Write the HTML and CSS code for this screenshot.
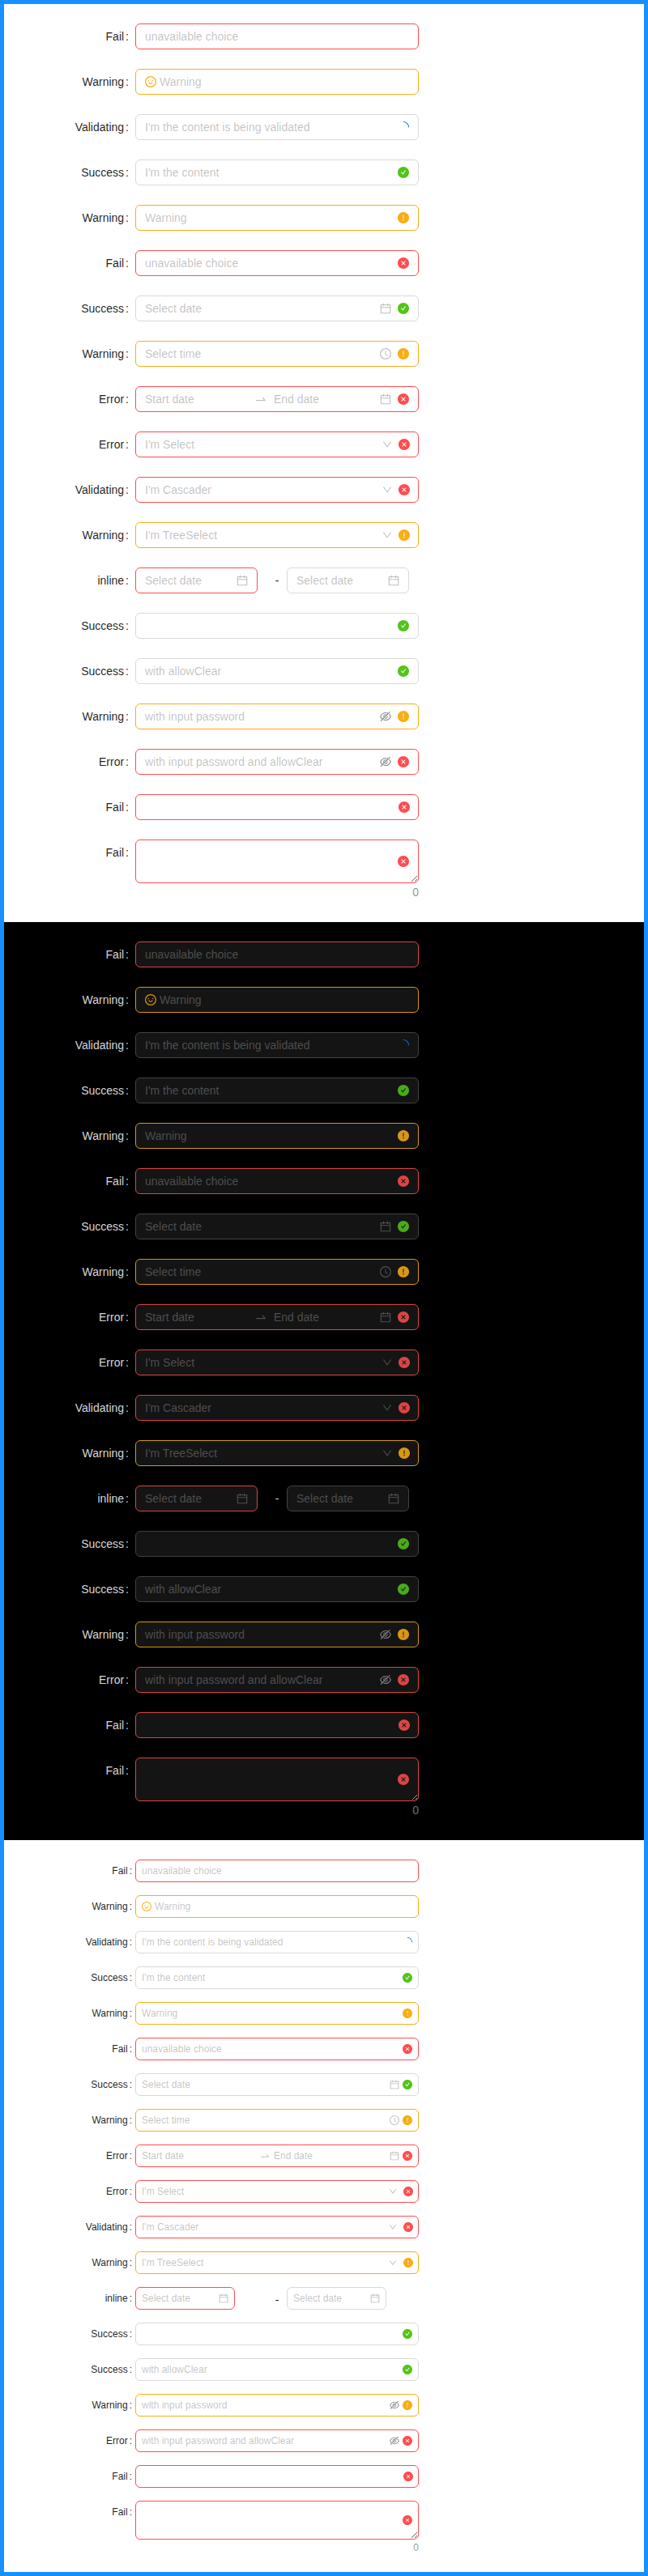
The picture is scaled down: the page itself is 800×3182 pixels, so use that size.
FILE: index.html
```html
<!DOCTYPE html>
<html lang="en">
<head>
<meta charset="utf-8">
<meta name="viewport" content="width=device-width, initial-scale=1">
<title>Form validation states</title>
<link rel="stylesheet" href="styles.css">
</head>
<body>
<svg class="sprite" aria-hidden="true">
  <symbol id="i-success" viewBox="64 64 896 896"><path d="M512 64C264.600 64 64 264.600 64 512s200.600 448 448 448 448-200.600 448-448S759.400 64 512 64zm193.500 301.700l-210.600 292a31.800 31.800 0 01-51.700 0L318.500 484.900c-3.800-5.300 0-12.700 6.500-12.700h46.900c10.200 0 19.900 4.900 25.900 13.300l71.200 98.800 157.200-218c6-8.300 15.600-13.300 25.900-13.300H699c6.500 0 10.300 7.400 6.500 12.700z"/></symbol>
  <symbol id="i-warning" viewBox="64 64 896 896"><path d="M512 64C264.600 64 64 264.600 64 512s200.600 448 448 448 448-200.600 448-448S759.400 64 512 64zm-32 232c0-4.400 3.600-8 8-8h48c4.400 0 8 3.600 8 8v272c0 4.400-3.600 8-8 8h-48c-4.400 0-8-3.600-8-8V296zm32 440a48 48 0 010-96 48 48 0 010 96z"/></symbol>
  <symbol id="i-error" viewBox="64 64 896 896"><path fill-rule="evenodd" d="M512 64c247.400 0 448 200.600 448 448S759.400 960 512 960 64 759.400 64 512 264.600 64 512 64zM640 338.800L512 466.750 384 338.800 338.800 384 466.750 512 338.800 640 384 685.200 512 557.250 640 685.200 685.200 640 557.250 512 685.200 384z"/></symbol>
  <symbol id="i-loading" viewBox="0 0 1024 1024"><path d="M988 548c-19.900 0-36-16.100-36-36 0-59.400-11.600-117-34.600-171.300a440.450 440.450 0 00-94.300-139.900 437.710 437.710 0 00-139.900-94.300C629 83.600 571.400 72 512 72c-19.900 0-36-16.100-36-36s16.100-36 36-36c69.100 0 136.200 13.500 199.300 40.300C772.300 66 827 103 874 150c47 47 83.900 101.800 109.700 162.700 26.700 63.100 40.200 130.200 40.200 199.300.1 19.900-16 36-35.900 36z"/></symbol>
  <symbol id="i-smile" viewBox="64 64 896 896"><circle cx="336" cy="421" r="48"/><circle cx="688" cy="421" r="48"/><circle cx="512" cy="512" r="410" fill="none" stroke="currentColor" stroke-width="76"/><path d="M664 533h-48.100c-4.200 0-7.800 3.200-8.100 7.400C604 589.900 562.500 629 512 629s-92.100-39.100-95.800-88.600c-.3-4.200-3.900-7.400-8.100-7.400H360a8 8 0 00-8 8.400c4.400 84.300 74.500 151.600 160 151.600s155.600-67.300 160-151.600a8 8 0 00-8-8.400z"/></symbol>
  <symbol id="i-calendar" viewBox="64 64 896 896"><path d="M880 184H712v-64c0-4.400-3.600-8-8-8h-56c-4.400 0-8 3.600-8 8v64H384v-64c0-4.400-3.600-8-8-8h-56c-4.400 0-8 3.600-8 8v64H144c-17.700 0-32 14.300-32 32v664c0 17.700 14.300 32 32 32h736c17.700 0 32-14.300 32-32V216c0-17.700-14.300-32-32-32zm-40 656H184V460h656v380zM184 392V256h128v48c0 4.400 3.600 8 8 8h56c4.400 0 8-3.600 8-8v-48h256v48c0 4.400 3.600 8 8 8h56c4.400 0 8-3.600 8-8v-48h128v136H184z"/></symbol>
  <symbol id="i-clock" viewBox="64 64 896 896"><circle cx="512" cy="512" r="410" fill="none" stroke="currentColor" stroke-width="76"/><path d="M686.700 638.600L544.100 535.500V288c0-4.400-3.600-8-8-8H488c-4.400 0-8 3.600-8 8v275.400c0 2.600 1.200 5 3.300 6.500l165.400 120.600c3.600 2.600 8.600 1.800 11.200-1.700l28.600-39c2.600-3.700 1.800-8.700-1.800-11.200z"/></symbol>
  <symbol id="i-down" viewBox="64 64 896 896"><path d="M884 256h-75c-5.100 0-9.900 2.500-12.900 6.600L512 654.200 227.900 262.600c-3-4.100-7.800-6.600-12.900-6.600h-75c-6.500 0-10.300 7.400-6.500 12.700l352.600 486.100c12.800 17.600 39 17.600 51.700 0l352.600-486.100c3.900-5.300.1-12.700-6.400-12.700z"/></symbol>
  <symbol id="i-swap" viewBox="0 0 1024 1024"><path d="M873.100 596.200l-164-208A32 32 0 00684 376h-64.800c-6.700 0-10.400 7.700-6.300 13l144.300 183H152c-4.400 0-8 3.600-8 8v60c0 4.400 3.600 8 8 8h695.900c26.800 0 41.700-30.800 25.200-51.800z"/></symbol>
  <symbol id="i-eye-off" viewBox="64 64 896 896"><path d="M942.200 486.200Q889.470 375.110 816.700 305l-50.880 50.880C807.310 395.530 843.450 447.400 874.700 512 791.500 684.200 673.400 766 512 766q-72.670 0-133.870-22.380L323 798.750Q408 838 512 838q288.300 0 430.200-300.300a60.290 60.290 0 000-51.500zm-63.570-320.640L836 122.880a8 8 0 00-11.320 0L715.310 232.200Q624.860 186 512 186q-288.300 0-430.200 300.300a60.300 60.300 0 000 51.500q56.690 119.400 136.500 191.410L112.480 835a8 8 0 000 11.310L155.170 889a8 8 0 0011.310 0l712.150-712.120a8 8 0 000-11.320zM149.300 512C232.600 339.800 350.700 258 512 258c54.540 0 104.130 9.360 149.120 28.390l-70.300 70.300a176 176 0 00-238.130 238.130l-83.420 83.420C223.100 637.490 183.300 582.280 149.300 512zm246.700 0a112.110 112.110 0 01146.200-106.690L401.310 546.200A112 112 0 01396 512z"/><path d="M508 624c-3.460 0-6.870-.16-10.250-.47l-52.820 52.820a176.090 176.090 0 00227.420-227.420l-52.820 52.820c.31 3.380.47 6.790.47 10.250a111.940 111.940 0 01-112 112z"/></symbol>
</svg>
<main class="page">
  <section class="theme"><form class="form"></form></section>
  <section class="theme theme-dark"><form class="form"></form></section>
  <section class="theme theme-compact"><form class="form"></form></section>
</main>
<script src="form.js"></script>
</body>
</html>
```

FILE: form.js
```js
const rows = [
  { label: 'Fail', state: 'error', hint: 'unavailable choice' },
  { label: 'Warning', state: 'warning', hint: 'Warning', prefix: 'smile' },
  { label: 'Validating', hint: "I'm the content is being validated", status: 'loading' },
  { label: 'Success', hint: "I'm the content", status: 'success' },
  { label: 'Warning', state: 'warning', hint: 'Warning', status: 'warning' },
  { label: 'Fail', state: 'error', hint: 'unavailable choice', status: 'error' },
  { label: 'Success', hint: 'Select date', extra: 'calendar', status: 'success' },
  { label: 'Warning', state: 'warning', hint: 'Select time', extra: 'clock', status: 'warning' },
  { label: 'Error', state: 'error', kind: 'range', extra: 'calendar', status: 'error' },
  { label: 'Error', state: 'error', kind: 'select', hint: "I'm Select", status: 'error' },
  { label: 'Validating', state: 'error', kind: 'select', hint: "I'm Cascader", status: 'error' },
  { label: 'Warning', state: 'warning', kind: 'select', hint: "I'm TreeSelect", status: 'warning' },
  { label: 'inline', kind: 'inline' },
  { label: 'Success', hint: '', status: 'success' },
  { label: 'Success', hint: 'with allowClear', status: 'success' },
  { label: 'Warning', state: 'warning', kind: 'password', hint: 'with input password', status: 'warning' },
  { label: 'Error', state: 'error', kind: 'password', hint: 'with input password and allowClear', status: 'error' },
  { label: 'Fail', state: 'error', kind: 'mention', hint: '', status: 'error' },
  { label: 'Fail', state: 'error', kind: 'textarea', status: 'error' }
];

const icon = (name, cls) =>
  `<svg class="icon ${cls}" aria-hidden="true"><use href="#i-${name}"></use></svg>`;

const input = (id, hint, type = 'text', attrs = '') =>
  `<input class="input" id="${id}" type="${type}" placeholder="${hint}" ${attrs}>`;

function control(row, id) {
  const box = (body, cls = '') => `<div class="box ${row.state || ''} ${cls}">${body}</div>`;
  const status = row.status ? icon(row.status, `status ${row.status}-icon`) : '';
  const extra = row.extra ? icon(row.extra, 'muted') : '';

  switch (row.kind) {
    case 'range':
      return box(input(id, 'Start date') + icon('swap', 'swap') +
        input(`${id}-end`, 'End date', 'text', 'aria-label="End date"') +
        `<span class="range-suffix">${extra}${status}</span>`);
    case 'select':
      return box(`<select class="input select" id="${id}"><option>${row.hint}</option></select>` +
        icon('down', 'muted arrow') + status, 'box-select');
    case 'inline':
      return `<div class="inline">
        <div class="inline-item"><div class="box error picker">${input(id, 'Select date')}${icon('calendar', 'muted')}</div></div>
        <span class="dash">-</span>
        <div class="inline-item"><div class="box picker">${input(`${id}-to`, 'Select date', 'text', 'aria-label="To date"')}${icon('calendar', 'muted')}</div></div>
      </div>`;
    case 'password':
      return box(input(id, row.hint, 'password') +
        `<button class="eye" type="button" aria-label="Show password">${icon('eye-off', '')}</button>` + status);
    case 'mention':
      return box(input(id, '') + status, 'box-select');
    case 'textarea':
      return `<div class="area"><textarea class="textarea" id="${id}" rows="2"></textarea>${status}</div>
        <div class="count">0</div>`;
    default: {
      const prefix = row.prefix ? icon(row.prefix, 'prefix') : '';
      return box(prefix + input(id, row.hint) + extra + status);
    }
  }
}

document.querySelectorAll('.form').forEach((form, f) => {
  form.innerHTML = rows.map((row, r) => {
    const id = `field-${f}-${r}`;
    return `<div class="row"><label class="label" for="${id}">${row.label}</label><div class="control">${control(row, id)}</div></div>`;
  }).join('');
});
```

FILE: styles.css
```css
* {
  box-sizing: border-box;
}

body {
  margin: 0;
}

.sprite {
  position: absolute;
  width: 0;
  height: 0;
}

.page {
  border: 5px solid #1890ff;
}

.theme {
  --bg: #ffffff;
  --field: #ffffff;
  --text: rgba(0, 0, 0, 0.88);
  --soft: rgba(0, 0, 0, 0.45);
  --hint: rgba(0, 0, 0, 0.25);
  --line: #d9d9d9;
  --error: #ff4d4f;
  --warning: #faad14;
  --success: #52c41a;
  --primary: #1677ff;
  --size: 14px;
  --leading: 22px;
  --height: 32px;
  --gap: 24px;
  --pad: 11px;
  --pad-y: 4px;
  --icon-gap: 8px;
  --range-gap: 4px;
  --swap: 16px;
  --arrow: 12px;
  --colon: 8px;
  --picker: 151px;
  padding: 24px 12px;
  background: var(--bg);
  color: var(--text);
  font-family: "Liberation Sans", Arial, sans-serif;
  font-size: var(--size);
  line-height: var(--leading);
}

.theme-dark {
  --bg: #000000;
  --field: #141414;
  --text: rgba(255, 255, 255, 0.85);
  --soft: rgba(255, 255, 255, 0.45);
  --hint: rgba(255, 255, 255, 0.25);
  --line: #424242;
  --error: #dc4446;
  --warning: #d89614;
  --success: #49aa19;
  --primary: #1668dc;
}

.theme-compact {
  --size: 12px;
  --leading: 20px;
  --height: 28px;
  --gap: 16px;
  --pad: 7px;
  --pad-y: 3px;
  --icon-gap: 4px;
  --range-gap: 2px;
  --swap: 14px;
  --arrow: 10px;
  --colon: 4px;
  --picker: 123px;
}

.form {
  display: flex;
  flex-direction: column;
  gap: var(--gap);
  max-width: 600px;
  padding-bottom: var(--gap);
}

.row {
  display: flex;
  align-items: flex-start;
}

.label {
  flex: 0 0 25%;
  line-height: var(--height);
  text-align: right;
  white-space: nowrap;
}

.label::after {
  content: ":";
  margin: 0 var(--colon) 0 2px;
}

.control {
  flex: 0 0 58.333%;
  min-width: 0;
}

.box {
  display: flex;
  align-items: center;
  gap: var(--icon-gap);
  height: var(--height);
  padding: 0 var(--pad);
  border: 1px solid var(--line);
  border-radius: 6px;
  background: var(--field);
}

.box-select {
  gap: 8px;
  padding-right: calc(var(--pad) - 1px);
}

.error {
  border-color: var(--error);
}

.warning {
  border-color: var(--warning);
}

.input {
  flex: 1 1 0;
  min-width: 0;
  width: 0;
  height: var(--leading);
  margin: 0;
  padding: 0;
  border: 0;
  outline: 0;
  background: transparent;
  color: var(--text);
  font: inherit;
}

.input::placeholder {
  color: var(--hint);
  opacity: 1;
}

.select {
  appearance: none;
  color: var(--hint);
}

.icon {
  display: block;
  flex: none;
  width: var(--size);
  height: var(--size);
  fill: currentColor;
}

.prefix {
  margin-right: calc(4px - var(--icon-gap));
  color: var(--warning);
}

.muted {
  color: var(--hint);
}

.arrow {
  width: var(--arrow);
  height: var(--arrow);
}

.swap {
  width: var(--swap);
  height: var(--swap);
  color: var(--hint);
}

.range-suffix {
  display: flex;
  gap: var(--icon-gap);
  margin-left: calc(var(--range-gap) - var(--icon-gap));
}

.success-icon {
  color: var(--success);
}

.warning-icon {
  color: var(--warning);
}

.error-icon {
  color: var(--error);
}

.loading-icon {
  color: var(--primary);
}

.eye {
  flex: none;
  padding: 0;
  border: 0;
  background: none;
  color: var(--soft);
  cursor: pointer;
}

.inline {
  display: flex;
  height: var(--height);
}

.inline-item {
  flex: 1 1 0;
  min-width: 0;
}

.picker {
  max-width: var(--picker);
}

.dash {
  flex: 0 0 24px;
  font-size: 14px;
  line-height: 32px;
  text-align: center;
}

.area {
  position: relative;
}

.textarea {
  display: block;
  width: 100%;
  margin: 0;
  padding: var(--pad-y) var(--pad);
  border: 1px solid var(--error);
  border-radius: 6px;
  outline: 0;
  background: var(--field);
  color: var(--text);
  font: inherit;
  resize: vertical;
}

.area .status {
  position: absolute;
  top: 0;
  right: calc(var(--pad) + 1px);
  bottom: 0;
  margin: auto 0;
}

.count {
  height: var(--leading);
  margin-bottom: calc(0px - var(--leading));
  color: var(--soft);
  text-align: right;
}
```
